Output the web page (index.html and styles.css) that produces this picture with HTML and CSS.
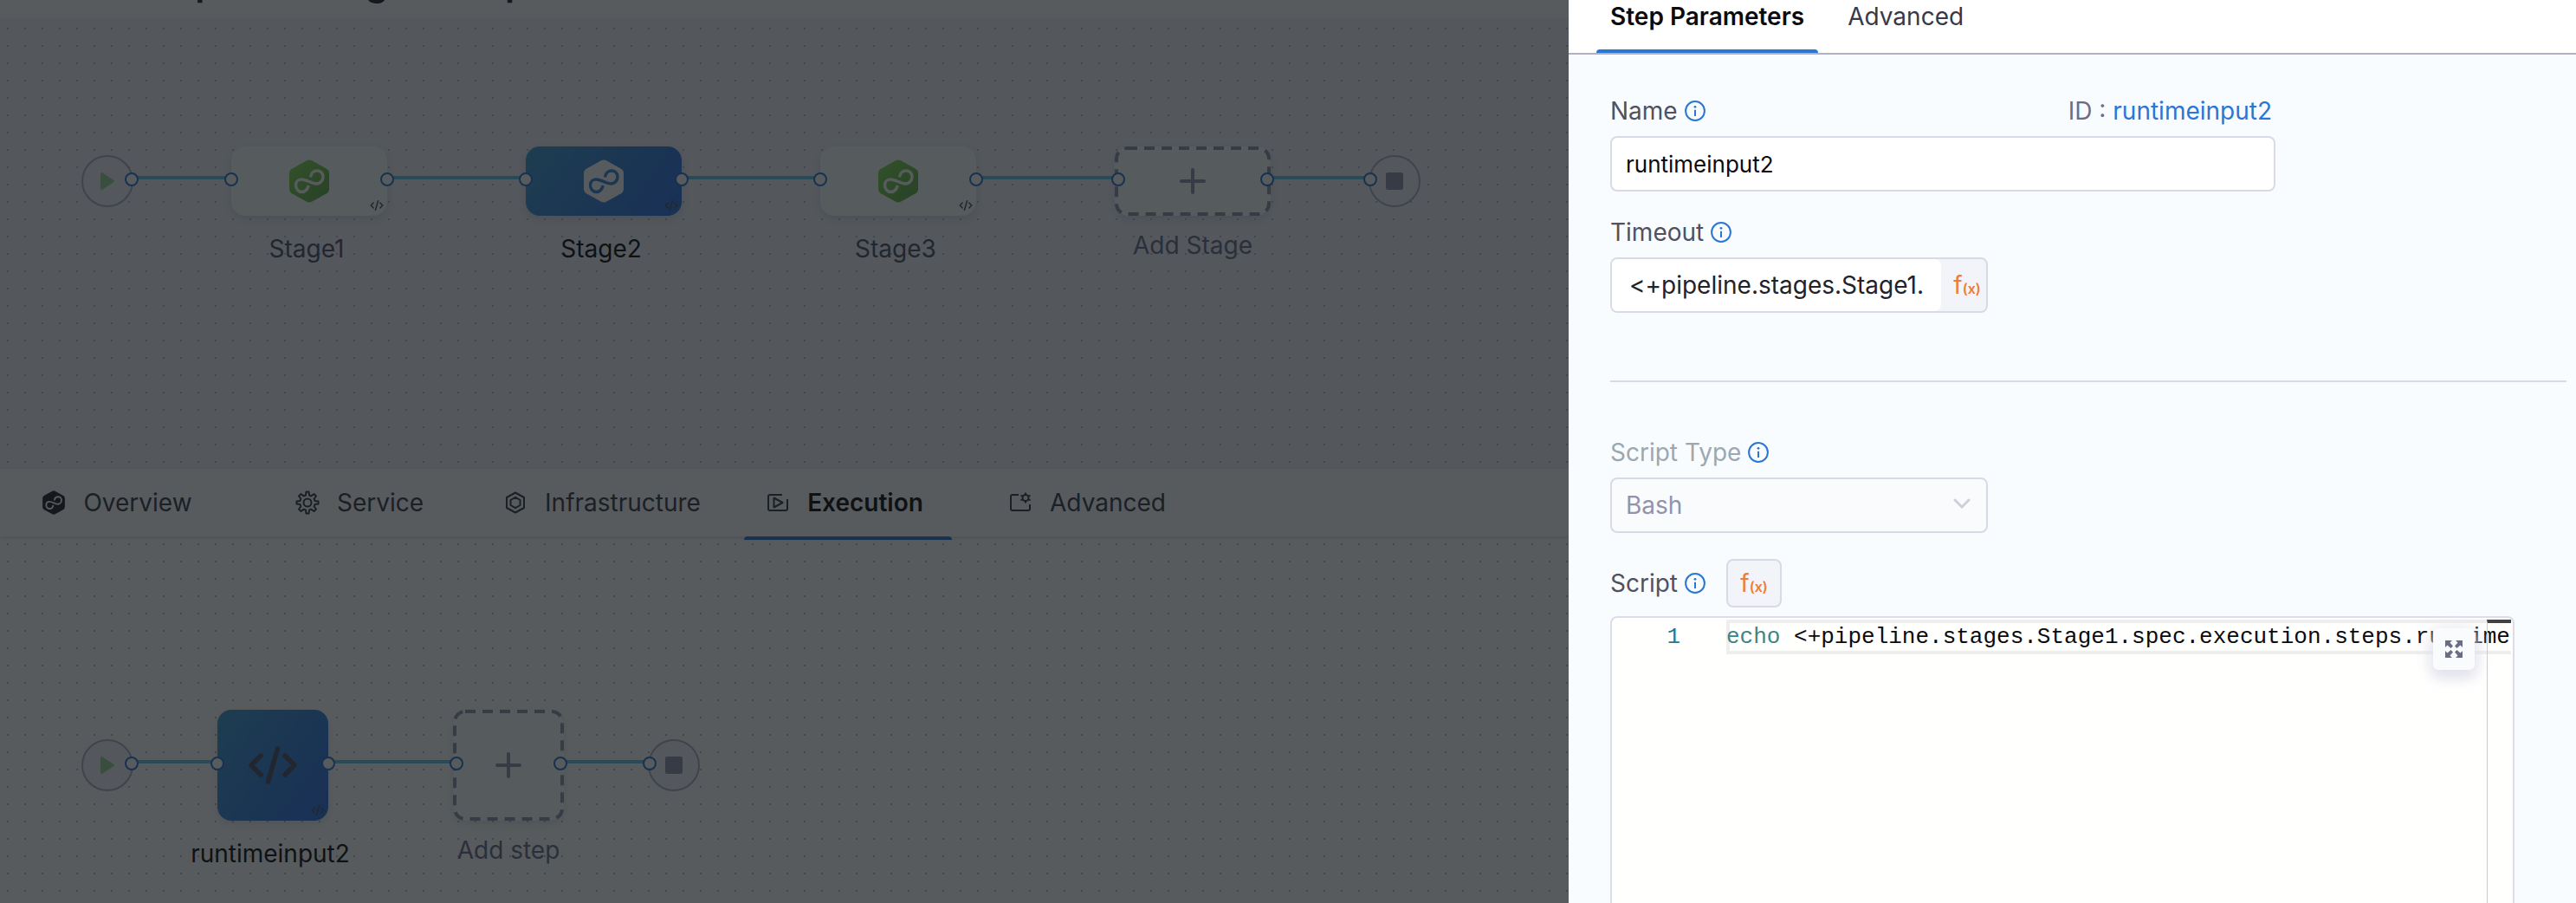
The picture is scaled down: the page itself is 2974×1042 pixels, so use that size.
FILE: index.html
```html
<!DOCTYPE html>
<html lang="en">
<head>
    <meta charset="UTF-8">
    <meta name="viewport" content="width=device-width, initial-scale=1.0">
    <title>Pipeline Studio</title>
    <link rel="stylesheet" href="styles.css">
</head>
<body>

    <!-- shared icons -->
    <svg class="sprite" aria-hidden="true">
        <defs>
            <linearGradient id="green" x1="0" y1="0" x2="1" y2="1">
                <stop offset="0" stop-color="#86e04f"/>
                <stop offset="1" stop-color="#5fa845"/>
            </linearGradient>
        </defs>
        <symbol id="hex" viewBox="0 0 46 50">
            <path d="M20 1.2Q23 -.4 26 1.2L43 10.8Q46 12.6 46 16V34Q46 37.4 43 39.2L26 48.8Q23 50.4 20 48.8L3 39.2Q0 37.4 0 34V16Q0 12.6 3 10.8Z"/>
        </symbol>
        <symbol id="loop" viewBox="0 0 46 50">
            <path d="M24.5 20.5C25 15.5 28.5 13 32.5 13C36 13 39 16 39 20C39 24 36 28 31 28C26 28 20 23 14 23C10 23 7.5 26 7.5 30C7.5 34 10.5 37.5 14.5 37.5C18.5 37.5 21.5 34 22 30" fill="none" stroke="currentColor" stroke-width="3.4"/>
        </symbol>
        <symbol id="code" viewBox="0 0 56 44">
            <path d="M14 11L3 22L14 33M42 11L53 22L42 33M33.5 3L22.5 41" fill="none" stroke="currentColor" stroke-width="5.5" stroke-linecap="round" stroke-linejoin="round"/>
        </symbol>
        <symbol id="plus" viewBox="0 0 30 30">
            <path d="M15 2V28M2 15H28" stroke="currentColor" stroke-width="4" stroke-linecap="round"/>
        </symbol>
        <symbol id="play" viewBox="0 0 16 20">
            <path d="M0 2Q0 -1 2.5 .6L15 8.7Q17 10 15 11.3L2.5 19.4Q0 21 0 18Z" fill="currentColor"/>
        </symbol>
        <symbol id="info" viewBox="0 0 24 24">
            <circle cx="12" cy="12" r="10.9" fill="none" stroke="currentColor" stroke-width="2"/>
            <circle cx="12" cy="7.3" r="1.4" fill="currentColor"/>
            <path d="M12 10.8V18" stroke="currentColor" stroke-width="2"/>
        </symbol>
    </svg>

    <main class="studio">
        <header class="studio-header">
            <h1>Sample Testing Startup</h1>
        </header>

        <section class="canvas stages">
            <div class="terminal start"><svg class="play"><use href="#play"/></svg><i class="port out"></i></div>
            <div class="link short"></div>
            <div class="node">
                <button class="box"><svg class="stage-icon"><use href="#hex" fill="url(#green)"/><use href="#loop"/></svg><svg class="mini"><use href="#code"/></svg><i class="port in"></i><i class="port out"></i></button>
                <span class="label">Stage1</span>
            </div>
            <div class="link"></div>
            <div class="node selected">
                <button class="box"><svg class="stage-icon"><use href="#hex"/><use href="#loop"/></svg><svg class="mini"><use href="#code"/></svg><i class="port in"></i><i class="port out"></i></button>
                <span class="label">Stage2</span>
            </div>
            <div class="link"></div>
            <div class="node">
                <button class="box"><svg class="stage-icon"><use href="#hex" fill="url(#green)"/><use href="#loop"/></svg><svg class="mini"><use href="#code"/></svg><i class="port in"></i><i class="port out"></i></button>
                <span class="label">Stage3</span>
            </div>
            <div class="link"></div>
            <div class="node add">
                <button class="box"><svg class="dashes"><rect x="2" y="2" rx="12"/></svg><svg class="plus"><use href="#plus"/></svg><i class="port in"></i><i class="port out"></i></button>
                <span class="label">Add Stage</span>
            </div>
            <div class="link short"></div>
            <div class="terminal end"><span class="stop"></span><i class="port in"></i></div>
        </section>

        <nav class="stage-tabs">
            <button class="stage-tab">
                <svg class="tab-icon" viewBox="0 0 28 28"><use href="#hex" x="1" y="0" width="26" height="28"/><use class="light" href="#loop" x="1" y="0" width="26" height="28"/></svg>
                Overview
            </button>
            <button class="stage-tab">
                <svg class="tab-icon outline" viewBox="0 0 28 28"><circle cx="14" cy="14" r="4.5"/><path d="M12.5 1.5h3l.6 4 2.2.9 3.2-2.4 2.5 2.5-2.4 3.2.9 2.2 4 .6v3l-4 .6-.9 2.2 2.4 3.2-2.5 2.5-3.2-2.4-2.2.9-.6 4h-3l-.6-4-2.2-.9-3.2 2.4-2.5-2.5 2.4-3.2-.9-2.2-4-.6v-3l4-.6.9-2.2-2.4-3.2 2.5-2.5 3.2 2.4 2.2-.9z"/></svg>
                Service
            </button>
            <button class="stage-tab">
                <svg class="tab-icon outline" viewBox="0 0 28 28"><path d="M14 2.5L24 8V20L14 25.5L4 20V8Z"/><path d="M14 7.8L19.5 11V17L14 20.2L8.5 17V11Z"/></svg>
                Infrastructure
            </button>
            <button class="stage-tab active">
                <svg class="tab-icon outline" viewBox="0 0 28 28"><path d="M19 5H5Q3 5 3 7V21Q3 23 5 23H23Q25 23 25 21V10"/><path d="M9.5 8.5V19.5L19.5 14Z"/></svg>
                Execution
            </button>
            <button class="stage-tab">
                <svg class="tab-icon outline" viewBox="0 0 28 28"><path d="M12 5H5Q3 5 3 7V21Q3 23 5 23H23Q25 23 25 21V16"/><circle cx="20" cy="8.5" r="3.5"/><path d="M20 2.5V5M20 12V14.5M14.5 5.5L17 7M23 10L25.5 11.5M14.5 11.5L17 10M23 7L25.5 5.5"/></svg>
                Advanced
            </button>
        </nav>

        <section class="canvas steps">
            <div class="terminal start"><svg class="play"><use href="#play"/></svg><i class="port out"></i></div>
            <div class="link short"></div>
            <div class="node selected">
                <button class="box"><svg class="step-icon"><use href="#code"/></svg><svg class="mini"><use href="#code"/></svg><i class="port in"></i><i class="port out"></i></button>
                <span class="label">runtimeinput2</span>
            </div>
            <div class="link"></div>
            <div class="node add">
                <button class="box"><svg class="dashes"><rect x="2" y="2" rx="12"/></svg><svg class="plus"><use href="#plus"/></svg><i class="port in"></i><i class="port out"></i></button>
                <span class="label">Add step</span>
            </div>
            <div class="link short"></div>
            <div class="terminal end"><span class="stop"></span><i class="port in"></i></div>
        </section>

        <div class="backdrop"></div>
    </main>

    <aside class="drawer">
        <nav class="drawer-tabs">
            <button class="drawer-tab active">Step Parameters</button>
            <button class="drawer-tab">Advanced</button>
        </nav>

        <form class="drawer-body">
            <div class="field wide">
                <div class="field-head">
                    <label for="name">Name</label>
                    <svg class="info"><use href="#info"/></svg>
                    <span class="step-id">ID : <b>runtimeinput2</b></span>
                </div>
                <input id="name" class="control name-input" type="text" value="runtimeinput2">
            </div>

            <div class="field">
                <div class="field-head">
                    <label for="timeout">Timeout</label>
                    <svg class="info"><use href="#info"/></svg>
                </div>
                <div class="control expression">
                    <input id="timeout" type="text" value="&lt;+pipeline.stages.Stage1.">
                    <button type="button" class="fx">f<sub>(x)</sub></button>
                </div>
            </div>

            <hr>

            <div class="field">
                <div class="field-head">
                    <label for="script-type" class="muted">Script Type</label>
                    <svg class="info"><use href="#info"/></svg>
                </div>
                <div class="select-wrap">
                    <select id="script-type" class="control" disabled>
                        <option>Bash</option>
                    </select>
                    <svg class="chevron" viewBox="0 0 20 12"><path d="M2 2L10 10L18 2"/></svg>
                </div>
            </div>

            <div class="script-head">
                <span>Script</span>
                <svg class="info"><use href="#info"/></svg>
                <button type="button" class="fx boxed">f<sub>(x)</sub></button>
            </div>
            <div class="editor">
                <span class="line-number">1</span>
                <pre class="code-line"><code><span class="keyword">echo</span> &lt;+pipeline.stages.Stage1.spec.execution.steps.runtime</code></pre>
                <div class="ruler"></div>
                <button type="button" class="expand" aria-label="Expand">
                    <svg viewBox="0 0 20 20"><path d="M0 0H8L5.5 2.5L9 6.5L6.5 9L2.5 5.5L0 8ZM20 0V8L17.5 5.5L13.5 9L11 6.5L14.5 2.5L12 0ZM0 20V12L2.5 14.5L6.5 11L9 13.5L5.5 17.5L8 20ZM20 20H12L14.5 17.5L11 13.5L13.5 11L17.5 14.5L20 12Z"/></svg>
                </button>
            </div>
        </form>
    </aside>

</body>
</html>
```

FILE: styles.css
```css
* {
    box-sizing: border-box;
}
body {
    margin: 0;
    height: 100vh;
    display: flex;
    overflow: hidden;
    font-family: Inter, "Liberation Sans", sans-serif;
    font-size: 28px;
    line-height: 34px;
    color: #4f5162;
}
button, input, select {
    font: inherit;
    color: inherit;
    margin: 0;
    padding: 0;
    border: 0;
    background: none;
}
button {
    cursor: pointer;
}
.sprite {
    position: absolute;
    width: 0;
    height: 0;
}

/* pipeline studio, dimmed while the drawer is open */
.studio {
    position: relative;
    flex: 1;
    min-width: 0;
    display: flex;
    flex-direction: column;
    overflow: hidden;
    background: #fff;
}
.backdrop {
    position: absolute;
    inset: 0;
    background: rgba(16, 22, 26, 0.7);
}
.studio-header {
    flex: none;
    height: 72px;
    margin-top: -50px;
    padding: 6px 0 0 136px;
    border-bottom: 1px solid #f3f3fa;
}
.studio-header h1 {
    margin: 0;
    font-size: 42px;
    line-height: 48px;
    font-weight: 600;
    color: #22222a;
    white-space: nowrap;
}

/* graph */
.canvas {
    display: flex;
    align-items: flex-start;
    padding-left: 94px;
    background-image: conic-gradient(from 90deg at 18px 18px, #bcbdc4 90deg, transparent 0);
    background-size: 20px 20px;
}
.stages {
    --size: 80px;
    flex: 0 0 519px;
    padding-top: 147px;
    background-color: #f3f3fa;
    background-position: 10px 12px;
}
.steps {
    --size: 128px;
    flex: 1;
    padding-top: 200px;
    background-position: 10px 10px;
}
.terminal {
    position: relative;
    flex: none;
    width: 60px;
    height: 60px;
    margin-top: calc(var(--size) / 2 - 30px);
    display: flex;
    align-items: center;
    justify-content: center;
    border: 2px solid #b0b1c4;
    border-radius: 50%;
    background: #f3f3fa;
}
.play {
    width: 16px;
    height: 20px;
    color: #9bd493;
}
.stop {
    width: 20px;
    height: 20px;
    border-radius: 2px;
    background: #9293ab;
}
.link {
    flex: none;
    width: 160px;
    height: 4px;
    margin-top: calc(var(--size) / 2 - 6px);
    background: #63c8f2;
}
.link.short {
    width: 113px;
}
.steps .link {
    width: 144px;
}
.steps .link.short {
    width: 97px;
}
.node {
    flex: none;
    width: 180px;
    display: flex;
    flex-direction: column;
    align-items: center;
}
.steps .node {
    width: 128px;
}
.box {
    position: relative;
    width: 100%;
    height: var(--size);
    display: flex;
    align-items: center;
    justify-content: center;
    border-radius: 16px;
    background: #fcfdfd;
    color: #4f5162;
    box-shadow: 0 4px 8px rgba(96, 97, 112, 0.16);
}
.selected .box {
    background: linear-gradient(125deg, #3f9bd0, #3783d8 50%, #2f70e4);
}
.stage-icon {
    width: 46px;
    height: 50px;
    color: #fff;
}
.selected .stage-icon {
    fill: #fff;
    color: #3783d8;
}
.step-icon {
    width: 56px;
    height: 44px;
}
.mini {
    position: absolute;
    right: 4px;
    bottom: 6px;
    width: 16px;
    height: 12px;
}
.dashes {
    position: absolute;
    inset: 0;
    width: 100%;
    height: 100%;
}
.dashes rect {
    width: calc(100% - 4px);
    height: calc(100% - 4px);
    fill: none;
    stroke: #9293ab;
    stroke-width: 4px;
    stroke-dasharray: 12 8;
}
.plus {
    width: 30px;
    height: 30px;
    color: #9293ab;
}
.port {
    position: absolute;
    top: calc(50% - 10px);
    width: 16px;
    height: 16px;
    border: 2px solid #2c72cc;
    border-radius: 50%;
    background: #fff;
}
.port.in {
    left: -8px;
}
.port.out {
    right: -8px;
}
.add .port.in {
    left: -4px;
}
.add .port.out {
    right: -4px;
}
.label {
    margin-top: 21px;
    margin-right: 6px;
    white-space: nowrap;
}
.selected .label {
    color: #0b0b0d;
}
.add .label {
    margin-top: 17px;
    margin-right: 0;
    color: #6b6d85;
}

/* stage tabs */
.stage-tabs {
    flex: 0 0 78px;
    display: flex;
    gap: 40px;
    padding-left: 19px;
    background: #fff;
    box-shadow: 0 2px 4px rgba(96, 97, 112, 0.2);
}
.stage-tab {
    position: relative;
    flex: none;
    width: 240px;
    padding-right: 8px;
    display: flex;
    align-items: center;
    justify-content: center;
    gap: 20px;
    color: #383946;
}
.stage-tab.active {
    font-weight: 600;
    color: #0b0b0d;
}
.stage-tab.active::after {
    content: "";
    position: absolute;
    left: 0;
    right: 0;
    top: 100%;
    height: 4px;
    border-radius: 4px 4px 0 0;
    background: #2b76d2;
}
.tab-icon {
    flex: none;
    width: 28px;
    height: 28px;
    fill: #22222a;
}
.tab-icon.outline {
    fill: none;
    stroke: #383946;
    stroke-width: 2px;
    stroke-linejoin: round;
}
.tab-icon .light {
    color: #fff;
}

/* drawer */
.drawer {
    flex: 0 0 1163px;
    display: flex;
    flex-direction: column;
    overflow: hidden;
    background: #f9fcff;
}
.drawer-tabs {
    flex: none;
    display: flex;
    gap: 18px;
    padding-left: 32px;
    background: #fff;
    border-bottom: 2px solid #b0b1c4;
}
.drawer-tab {
    position: relative;
    padding: 2px 16px 25px;
    color: #383946;
}
.drawer-tab.active {
    font-weight: 600;
    color: #0b0b0d;
}
.drawer-tab.active::after {
    content: "";
    position: absolute;
    left: 0;
    right: 0;
    bottom: 0;
    height: 4px;
    border-radius: 4px 4px 0 0;
    background: #2b76d2;
}
.drawer-body {
    padding: 48px 11px 0 48px;
}
.field {
    width: 436px;
    margin-bottom: 30px;
}
.field.wide {
    width: 768px;
}
.field-head {
    display: flex;
    align-items: center;
    gap: 8px;
    margin-bottom: 12px;
}
.muted {
    color: #9ca8b0;
}
.info {
    flex: none;
    width: 24px;
    height: 24px;
    color: #2b76d2;
}
.step-id {
    margin-left: auto;
    padding-right: 4px;
    color: #6b6d85;
}
.step-id b {
    font-weight: 400;
    color: #2b76d2;
}
.control {
    width: 100%;
    height: 64px;
    border: 2px solid #d9dae5;
    border-radius: 8px;
    background: #fff;
}
.name-input {
    padding: 0 16px;
    font-size: 26px;
    color: #0b0b0d;
}
.expression {
    display: flex;
    overflow: hidden;
    background: #f3f3fa;
}
.expression input {
    flex: 1;
    min-width: 0;
    padding: 0 0 0 20px;
    border-radius: 0 8px 8px 0;
    background: #fff;
    color: #22222a;
}
.fx {
    width: 52px;
    padding-left: 8px;
    color: #ee7c35;
}
.fx sub {
    font-size: 16px;
    font-weight: 600;
    line-height: 16px;
    vertical-align: baseline;
}
.fx.boxed {
    width: 64px;
    height: 56px;
    margin-left: 16px;
    padding: 0;
    border: 2px solid #d9dae5;
    border-radius: 8px;
    background: #f3f3fa;
}
hr {
    height: 2px;
    margin: 78px 0 64px;
    border: 0;
    background: #d9dae5;
}
.select-wrap {
    position: relative;
}
.select-wrap .control {
    display: block;
    appearance: none;
    padding: 0 16px;
    background: #fafbfc;
    color: #9293ab;
    opacity: 1;
}
.chevron {
    position: absolute;
    right: 20px;
    top: 24px;
    width: 20px;
    height: 12px;
    fill: none;
    stroke: #cdd0da;
    stroke-width: 3px;
    stroke-linecap: round;
}
.script-head {
    display: flex;
    align-items: center;
    gap: 8px;
    margin-bottom: 10px;
}
.editor {
    position: relative;
    display: flex;
    align-items: flex-start;
    width: 1044px;
    height: 420px;
    padding: 2px;
    border: 2px solid #dcdde8;
    border-radius: 8px;
    background: #fffffe;
    font-family: "Liberation Mono", monospace;
    font-size: 26px;
}
.line-number {
    flex: none;
    width: 77px;
    margin-right: 53px;
    line-height: 40px;
    text-align: right;
    color: #237893;
}
.code-line {
    flex: 1;
    min-width: 0;
    height: 40px;
    margin: 0;
    overflow: hidden;
    box-shadow: inset 0 4px #eee, inset 0 -4px #eee, inset 4px 0 #eee;
    font: inherit;
    line-height: 40px;
    color: #0b0b0d;
}
.code-line code {
    font: inherit;
}
.keyword {
    color: #3b8686;
}
.ruler {
    position: absolute;
    top: 2px;
    right: 2px;
    bottom: 0;
    width: 28px;
    border-left: 1px solid #ccc;
    border-top: 4px solid #424242;
}
.expand {
    position: absolute;
    top: 12px;
    right: 44px;
    width: 48px;
    height: 48px;
    display: flex;
    align-items: center;
    justify-content: center;
    border-radius: 6px;
    background: #fafbfc;
    box-shadow: 0 0 20px rgba(232, 232, 242, 0.9), 0 8px 16px rgba(196, 197, 220, 0.6);
}
.expand svg {
    width: 20px;
    height: 20px;
    fill: #6b6d85;
}
```
